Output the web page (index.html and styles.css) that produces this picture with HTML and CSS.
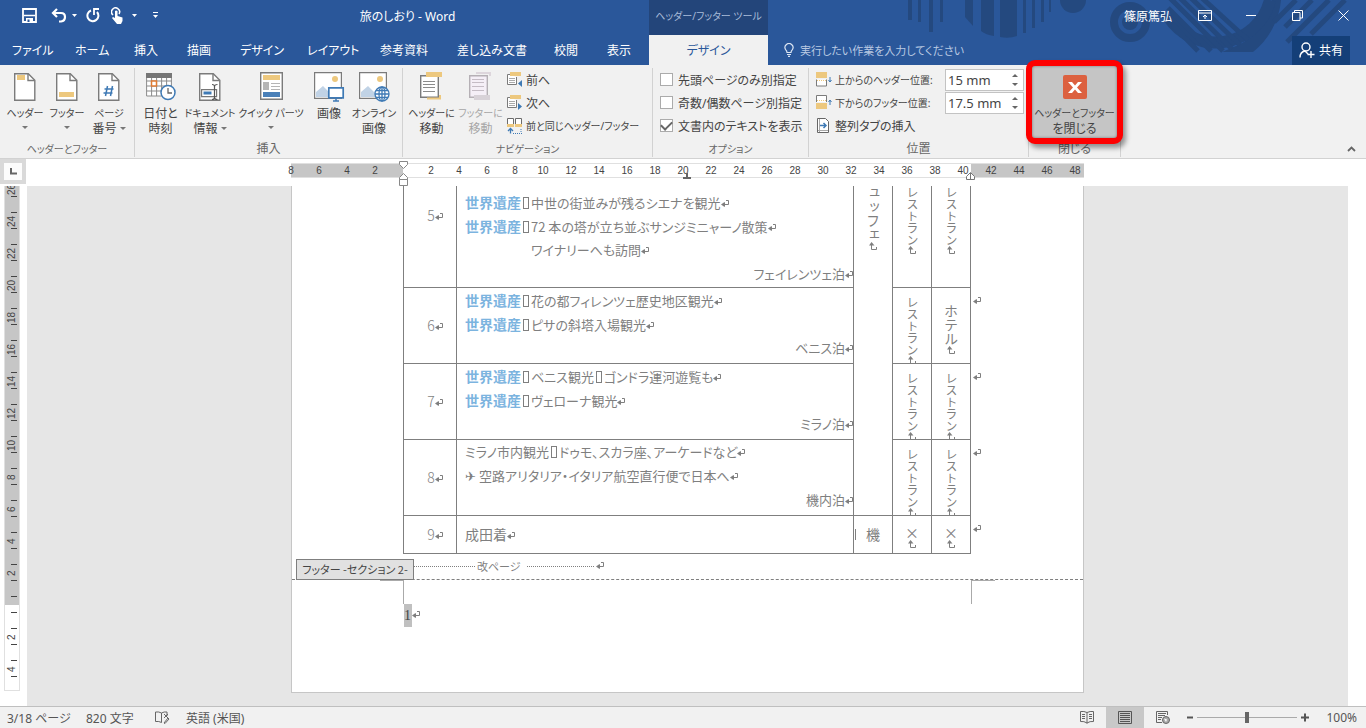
FILE: index.html
```html
<!DOCTYPE html>
<html lang="ja">
<head>
<meta charset="utf-8">
<title>旅のしおり - Word</title>
<link rel="stylesheet" href="styles.css">
</head>
<body>
<svg class="defs" aria-hidden="true">
  <symbol id="ret" viewBox="0 0 8 8"><path d="M5 .5h2.500v4H2M3.500 2.500v4M2.500 3.500v2" fill="none" stroke="currentColor"/><path d="M0 4.500 3.500 2v5z" fill="currentColor"/></symbol>
  <symbol id="vret" viewBox="0 0 8 8"><path d="M2.500 2v5.500h5V5" fill="none" stroke="currentColor"/><path d="M2.500 0 5.500 3.500H0z" fill="currentColor"/></symbol>
  <symbol id="sheet" viewBox="0 0 22 28"><path d="M.7.7h13.600l6.500 6.500v20H.7z" fill="#fff" stroke="#7b7b7b" stroke-width="1.400"/><path d="M14 1v6.500h6.500" fill="none" stroke="#7b7b7b" stroke-width="1.400"/></symbol>
  <symbol id="photo" viewBox="0 0 28 27"><path d="M.6.6h26.800v25.800H.6z" fill="#fff" stroke="#7b7b7b" stroke-width="1.200"/><circle cx="21" cy="7" r="3" fill="#edc87e"/><path d="M2 25v-5l7-6 6 6 3-3 8 8z" fill="#c1d3e6"/></symbol>
</svg>
<div class="app">
  <header class="header">
    <svg class="decor" width="466" height="65" viewBox="900 0 466 65" aria-hidden="true">
      <g fill="#24497f"><path d="M908 0h4v20h-4zM918 0h3v22h-3zM929 0h4v32h-4zM940 0h3v22h-3zM965 0h8v26l-8-9zM981 0h13v36q-8-1-13-5zM1000 0h17v36q-8 3-17 1zM1023 0h3v33h-3zM1032 0h3v28h-3zM1041 0h3v22h-3zM1049 0h2v12h-2z"/><circle cx="1073" cy="0" r="13"/><circle cx="1130" cy="22" r="8"/></g>
      <circle cx="1130" cy="22" r="16" fill="none" stroke="#24497f" stroke-width="8"/>
      <path d="M1272 0A58 58 0 0 1 1236 46L1222 52H1253A75 75 0 0 0 1281 0z" fill="#24497f"/>
      <path d="M1270 0A56 56 0 0 1 1168 16" fill="none" stroke="#24497f" stroke-width="12"/>
      <path d="M1160 12l38 39M1168 8l43 43M1166 -6l57 57M1178 -4l54 53M1190 -3l50 48M1202 -2l46 42M1296 0l-22 22M1312 0l-27 27M1329 0l-42 42M1345 0l-34 34" stroke="#24497f" stroke-width="5"/>
    </svg>
    <div class="titlebar">
      <div class="quick">
        <button aria-label="上書き保存" class="q-save"><svg width="15" height="15" viewBox="0 0 15 15"><path d="M1 1h13v13H1z" fill="none" stroke="#fff" stroke-width="1.800"/><path d="M2 7.500h11" stroke="#fff" stroke-width="1.500"/><path d="M4 10h7v5H4z" fill="#fff"/><path d="M5.500 11.500h2V14h-2z" fill="#2a579a"/></svg></button>
        <button aria-label="元に戻す" class="q-undo"><svg width="16" height="15" viewBox="0 0 16 15"><path d="M2 5h8q4 0 4 4t-4 4.500H8M6 1 2 5l4 4" fill="none" stroke="#fff" stroke-width="2.200"/></svg><svg class="dd" width="5" height="3"><path d="M0 0h5L2.500 3z" fill="#fff"/></svg></button>
        <button aria-label="繰り返し" class="q-redo"><svg width="14" height="15" viewBox="0 0 14 15"><path d="M5 2.500A5.500 5.500 0 1 0 11 4" fill="none" stroke="#fff" stroke-width="2"/><path d="M8 7V1h5M8 6.500V2" fill="none" stroke="#fff" stroke-width="1.800"/></svg></button>
        <button aria-label="タッチ/マウス モード" class="q-touch"><svg width="13" height="17" viewBox="0 0 13 17"><path d="M2 8A4 4 0 1 1 8 7" fill="none" stroke="#fff" stroke-width="1.500"/><path d="M4 4q1-1 2.500 0v5l5 1.500V14l-1.500 3H6l-5-6 1-1 2 1z" fill="#fff"/></svg><svg class="dd" width="5" height="3"><path d="M0 0h5L2.500 3z" fill="#fff"/></svg></button>
        <button aria-label="カスタマイズ" class="q-more"><svg width="7" height="7"><path d="M1 .5h5" stroke="#fff"/><path d="M1 3h5L3.500 6z" fill="#fff"/></svg></button>
      </div>
      <div class="title">旅のしおり - Word</div>
    </div>
    <div class="context kana">ヘッダー/フッター ツール</div>
    <div class="window">
      <span class="user">篠原篤弘</span>
      <button aria-label="リボンの表示オプション"><svg width="14" height="11"><path d="M.5.5h13v10H.5zM.5 3h13M7 9V5M5 7l2-2 2 2" fill="none" stroke="#fff"/></svg></button>
      <button aria-label="最小化"><svg width="10" height="11"><path d="M0 5.500h10" stroke="#fff"/></svg></button>
      <button aria-label="元に戻す (縮小)"><svg width="11" height="11"><path d="M.5 2.500h7.500v8H.5zM2.500 2.500v-2h8v7.500H8" fill="none" stroke="#fff"/></svg></button>
      <button aria-label="閉じる"><svg width="11" height="11"><path d="m.5.5 10 10m0-10-10 10" stroke="#fff"/></svg></button>
    </div>
    <nav class="tabs">
      <a href="#">ファイル</a><a href="#">ホーム</a><a href="#">挿入</a><a href="#">描画</a><a href="#">デザイン</a><a href="#">レイアウト</a><a href="#">参考資料</a><a href="#">差し込み文書</a><a href="#">校閲</a><a href="#">表示</a>
    </nav>
    <a href="#" class="tab-active">デザイン</a>
    <div class="tell">
      <svg width="10" height="14" viewBox="0 0 10 14"><path d="M3 9.500Q3 8 1.600 6.600A4 4 0 1 1 8.400 6.600Q7 8 7 9.500zM3 11.500h4M4 13.300h2" fill="none" stroke="#dbe5f3" stroke-width="1.200"/></svg>
      <span class="hint">実行したい作業を入力してください</span>
      <button class="share"><svg width="16" height="17" viewBox="0 0 16 17"><circle cx="7" cy="5" r="4" fill="none" stroke="#fff" stroke-width="1.400"/><path d="M1 15.500Q1 10 6 9l3 3M12 9v7M8.500 12.500h7" fill="none" stroke="#fff" stroke-width="1.400"/></svg>共有</button>
    </div>
  </header>

  <section class="ribbon">
    <div class="group">
      <div class="tools g1">
        <button class="big"><svg width="22" height="28"><use href="#sheet"/><path d="M3 3h8v5H3z" fill="#edc87e"/></svg><span class="kana">ヘッダー</span><i class="caret"></i></button>
        <button class="big"><svg width="22" height="28"><use href="#sheet"/><path d="M3 20h15v5H3z" fill="#edc87e"/></svg><span class="kana">フッター</span><i class="caret"></i></button>
        <button class="big"><svg width="22" height="28"><use href="#sheet"/><path d="M9.500 14 7.500 24M14.500 14l-2 10M6.500 17h9M5.500 21h9" stroke="#3f7ab5" stroke-width="1.500"/></svg><span class="kana">ページ</span><span>番号 <i class="caret"></i></span></button>
      </div>
      <h2 class="kana">ヘッダーとフッター</h2>
    </div>
    <div class="group">
      <div class="tools g2">
        <button class="big"><svg width="30" height="28"><path d="M.6 4h25v20H.6z" fill="#fff"/><path d="M.6 4v20H18M.6 9h25M.6 14h25M.6 19h17M5.600 4v20M10.600 4v20M15.600 4v20M20.600 4v12M25.400 4v11" fill="none" stroke="#8b8b8b"/><path d="M0 1h26v5H0z" fill="#767676"/><path d="M5.500 9h5v5h-5z" fill="#fff" stroke="#e07b33" stroke-width="1.500"/><circle cx="22" cy="20.500" r="7" fill="#fff" stroke="#3f7ab5" stroke-width="1.500"/><path d="M22 16v5h4" fill="none" stroke="#666" stroke-width="1.300"/></svg><span>日付と<br>時刻</span></button>
        <button class="big"><svg width="22" height="28"><use href="#sheet"/><path d="M2.600 17.600h15v7h-15z" fill="#fff" stroke="#777" stroke-width="1.200"/><path d="M4.500 19.500h8v3h-8z" fill="#3f7ab5"/><path d="M13 12.500q2.500 0 2.500 2v11q0 2-2.500 2M18.500 12.500q-3 0-3 2v11q0 2 3 2" fill="none" stroke="#555" stroke-width="1.200"/></svg><span class="kana">ドキュメント</span><span>情報 <i class="caret"></i></span></button>
        <button class="big"><svg width="23" height="28"><path d="M.7.7h21.600v26.600H.7z" fill="#fff" stroke="#7b7b7b" stroke-width="1.400"/><path d="M3 3h17v5H3z" fill="#edc87e"/><path d="M3 10h6v8H3z" fill="#b5b5b5"/><path d="M11 11.500h9M11 14.500h9M11 17.500h9" stroke="#b5b5b5"/><path d="M3 20h17v5H3z" fill="#4a80b8"/></svg><span class="kana">クイック パーツ</span><i class="caret"></i></button>
        <button class="big"><svg width="30" height="30"><use href="#photo" width="28" height="27"/><path d="M14.800 15.800h14.400v10H14.800z" fill="#fff" stroke="#3f7ab5" stroke-width="1.700"/><path d="M22 26v3M19 29h6" stroke="#3f7ab5" stroke-width="1.500"/></svg><span>画像</span></button>
        <button class="big"><svg width="31" height="30"><use href="#photo" width="28" height="27"/><g fill="none" stroke="#3f7ab5" stroke-width="1.300"><circle cx="23" cy="22" r="7" fill="#fff"/><ellipse cx="23" cy="22" rx="3" ry="7"/><path d="M16 22h14M17 18.500h12M17 25.500h12M23 15v14"/></g></svg><span class="kana">オンライン</span><span>画像</span></button>
      </div>
      <h2>挿入</h2>
    </div>
    <div class="group">
      <div class="tools g3">
        <button class="big"><svg width="23" height="28"><path d="M.7 3.700h17.600v21.600H.7z" fill="#fff" stroke="#7b7b7b" stroke-width="1.400"/><path d="M6 0h16v5H6z" fill="#edc87e"/><path d="M3 9.500h12M3 12.500h12M3 15.500h12M3 19.500h12" stroke="#8b8b8b"/><path d="M20 23v3.500H7" fill="none" stroke="#edc87e" stroke-width="2"/></svg><span class="kana">ヘッダーに</span><span>移動</span></button>
        <button class="big off" disabled><svg width="23" height="28"><path d="M.7 3.700h17.600v21.600H.7z" fill="#f5eff7" stroke="#b5b0b5" stroke-width="1.400"/><path d="M7 1h14v3" fill="none" stroke="#ddd6dc" stroke-width="2"/><path d="M3 7.500h12M3 10.500h12M3 14.500h12M3 18.500h12" stroke="#c5bcc5"/><path d="M5 23h16v5H5z" fill="#d8d2d8"/></svg><span class="kana">フッターに</span><span>移動</span></button>
        <div class="rows">
          <button><svg width="16" height="16"><path d="M3 2.500H.5v10h9V5" fill="#fff" stroke="#7b7b7b"/><path d="M3 0h11v4H3z" fill="#edc87e"/><path d="M2 6.500h6M2 8.500h6M2 10.500h6" stroke="#aaa"/><path d="M15 8v7l-4-3.500z" fill="#3f7ab5"/></svg>前へ</button>
          <button><svg width="16" height="16"><path d="M3 2.500H.5v10h9V5" fill="#fff" stroke="#7b7b7b"/><path d="M3 0h11v4H3z" fill="#edc87e"/><path d="M2 6.500h6M2 8.500h6M2 10.500h6" stroke="#aaa"/><path d="M11 8v7l4-3.500z" fill="#3f7ab5"/></svg>次へ</button>
          <button class="kana"><svg width="16" height="16"><path d="M.5 6V.5h6V6M8.500 6V.5h6V6" fill="#fff" stroke="#6b6b6b"/><path d="M0 6h7v3H0zM8 6h7v3H8z" fill="#edc87e"/><path d="M3.500 15.500V11M1 13l2.500-2.500L6 13" fill="none" stroke="#3f7ab5" stroke-width="1.300"/><path d="M6 15.500h9M14 11v4" stroke="#3f7ab5" stroke-dasharray="1 1"/></svg>前と同じヘッダー/フッター</button>
        </div>
      </div>
      <h2 class="kana">ナビゲーション</h2>
    </div>
    <div class="group">
      <div class="tools g4">
        <label><input type="checkbox">先頭ページのみ別指定</label>
        <label><input type="checkbox">奇数/偶数ページ別指定</label>
        <label><input type="checkbox" checked>文書内のテキストを表示</label>
      </div>
      <h2 class="kana">オプション</h2>
    </div>
    <div class="group">
      <div class="tools g5">
        <svg width="16" height="15"><path d="M.5 7.500V14h10V7.500" fill="#fff" stroke="#7b7b7b"/><path d="M0 0h11v6H0z" fill="#edc87e"/><path d="M1 8.500h9" stroke="#edc87e" stroke-dasharray="1 1"/><path d="M14 5v5M12.500 8 14 10l1.500-2" fill="none" stroke="#3f7ab5"/></svg><label class="kana" for="top">上からのヘッダー位置:</label>
        <div class="spin"><input id="top" value="15 mm"><span class="arrows"><button aria-label="増やす" class="up"></button><button aria-label="減らす" class="down"></button></span></div>
        <svg width="16" height="15"><path d="M.5 7V.5h10V7" fill="#fff" stroke="#7b7b7b"/><path d="M0 8h11v6H0z" fill="#edc87e"/><path d="M1 5.500h9" stroke="#edc87e" stroke-dasharray="1 1"/><path d="M14 5v5M12.500 7 14 5l1.500 2" fill="none" stroke="#3f7ab5"/></svg><label class="kana" for="bottom">下からのフッター位置:</label>
        <div class="spin"><input id="bottom" value="17.5 mm"><span class="arrows"><button aria-label="増やす" class="up"></button><button aria-label="減らす" class="down"></button></span></div>
        <svg width="16" height="16"><path d="M1.500.5h8l3 3v11h-11z" fill="#fff" stroke="#666"/><path d="M3.500 1v13M2 12.500h10" stroke="#aaa"/><path d="M4 7.500h6M7.500 5 10 7.500 7.500 10" fill="none" stroke="#3f7ab5" stroke-width="1.500"/></svg><button class="plain">整列タブの挿入</button>
      </div>
      <h2>位置</h2>
    </div>
    <div class="group closing">
      <button class="close"><svg width="24" height="24"><rect width="24" height="24" rx="2" fill="#dc6140"/><path d="M5 7h4l3 3.500L15 7h4l-5 5.500 5 5.500h-4l-3-3.500L9 18H5l5-5.500z" fill="#fff"/></svg><span class="lines"><span class="kana">ヘッダーとフッター</span><span>を閉じる</span></span></button>
      <h2>閉じる</h2>
    </div>
    <button class="fold" aria-label="リボンを折りたたむ"><svg width="9" height="6"><path d="M1 5l3.500-3.500L8 5" fill="none" stroke="#666" stroke-width="1.800"/></svg></button>
  </section>

  <main class="desk">
    <div class="corner"><button aria-label="左揃えタブ"><svg width="7" height="7"><path d="M1 0v5.500h6" fill="none" stroke="#666" stroke-width="2"/></svg></button></div>
    <div class="hruler-wrap">
      <div class="hruler">
        <span>8</span><span>6</span><span>4</span><span>2</span><span></span><span>2</span><span>4</span><span>6</span><span>8</span><span>10</span><span>12</span><span>14</span><span>16</span><span>18</span><span>20</span><span>22</span><span>24</span><span>26</span><span>28</span><span>30</span><span>32</span><span>34</span><span>36</span><span>38</span><span>40</span><span>42</span><span>44</span><span>46</span><span>48</span>
      </div>
      <svg class="mark indent" width="9" height="26"><path d="M.5.500h8v3l-4 4-4-4zM4.500 12.500l4 4v2h-8v-2zM.5 18.500h8v6h-8z" fill="#fff" stroke="#888"/></svg>
      <svg class="mark tabstop" width="8" height="6"><path d="M4 0v5M0 5h8" stroke="#666" stroke-width="2"/></svg>
      <svg class="mark right-indent" width="9" height="8"><path d="M4.500.500l4 4v3h-8v-3zM4.500 1v6" fill="#fff" stroke="#777"/></svg>
    </div>
    <div class="vruler-wrap">
      <div class="vruler">
        <span>26</span><span>24</span><span>22</span><span>20</span><span>18</span><span>16</span><span>14</span><span>12</span><span>10</span><span>8</span><span>6</span><span>4</span><span>2</span><span></span><span>2</span><span>4</span>
      </div>
    </div>
    <div class="canvas">
      <article class="page">
        <table class="plan">
          <colgroup><col class="c-day"><col class="c-text"><col class="c-meal"><col class="c-meal"><col class="c-meal"><col class="c-end"></colgroup>
          <tr class="r5">
            <td class="day">5<svg class="ret"><use href="#ret"/></svg></td>
            <td class="body"><p><b>世界遺産</b><i class="box"></i>中世の街並みが残るシエナを観光<svg class="ret"><use href="#ret"/></svg></p><p><b>世界遺産</b><i class="box"></i>72 本の塔が立ち並ぶサンジミニャーノ散策<svg class="ret"><use href="#ret"/></svg></p><p class="sub">ワイナリーへも訪問<svg class="ret"><use href="#ret"/></svg></p><p class="stay">フェイレンツェ泊<svg class="ret"><use href="#ret"/></svg></p></td>
            <td class="meal" rowspan="4"><div class="v large">ュッフェ<svg class="ret"><use href="#vret"/></svg></div></td>
            <td class="meal"><div class="v">レストラン<svg class="ret"><use href="#vret"/></svg></div></td>
            <td class="meal"><div class="v">レストラン<svg class="ret"><use href="#vret"/></svg></div></td>
            <td class="end"></td>
          </tr>
          <tr>
            <td class="day">6<svg class="ret"><use href="#ret"/></svg></td>
            <td class="body"><p><b>世界遺産</b><i class="box"></i>花の都フィレンツェ歴史地区観光<svg class="ret"><use href="#ret"/></svg></p><p><b>世界遺産</b><i class="box"></i>ピサの斜塔入場観光<svg class="ret"><use href="#ret"/></svg></p><p class="stay">ベニス泊<svg class="ret"><use href="#ret"/></svg></p></td>
            <td class="meal"><div class="v">レストラン<svg class="ret"><use href="#vret"/></svg></div></td>
            <td class="meal"><div class="v large hotel">ホテル<svg class="ret"><use href="#vret"/></svg></div></td>
            <td class="end"><svg class="ret"><use href="#ret"/></svg></td>
          </tr>
          <tr>
            <td class="day">7<svg class="ret"><use href="#ret"/></svg></td>
            <td class="body"><p><b>世界遺産</b><i class="box"></i>ベニス観光<i class="box"></i>ゴンドラ運河遊覧も<svg class="ret"><use href="#ret"/></svg></p><p><b>世界遺産</b><i class="box"></i>ヴェローナ観光<svg class="ret"><use href="#ret"/></svg></p><p class="stay">ミラノ泊<svg class="ret"><use href="#ret"/></svg></p></td>
            <td class="meal"><div class="v">レストラン<svg class="ret"><use href="#vret"/></svg></div></td>
            <td class="meal"><div class="v">レストラン<svg class="ret"><use href="#vret"/></svg></div></td>
            <td class="end"><svg class="ret"><use href="#ret"/></svg></td>
          </tr>
          <tr>
            <td class="day">8<svg class="ret"><use href="#ret"/></svg></td>
            <td class="body"><p>ミラノ市内観光<i class="box"></i>ドゥモ、スカラ座、アーケードなど<svg class="ret"><use href="#ret"/></svg></p><p><span class="plane">✈</span>空路アリタリア・イタリア航空直行便で日本へ<svg class="ret"><use href="#ret"/></svg></p><p class="stay">機内泊<svg class="ret"><use href="#ret"/></svg></p></td>
            <td class="meal"><div class="v">レストラン<svg class="ret"><use href="#vret"/></svg></div></td>
            <td class="meal"><div class="v">レストラン<svg class="ret"><use href="#vret"/></svg></div></td>
            <td class="end"><svg class="ret"><use href="#ret"/></svg></td>
          </tr>
          <tr class="r9">
            <td class="day">9<svg class="ret"><use href="#ret"/></svg></td>
            <td class="body">成田着<svg class="ret"><use href="#ret"/></svg></td>
            <td class="meal mid flight">機</td>
            <td class="meal"><div class="v large">×<svg class="ret"><use href="#vret"/></svg></div></td>
            <td class="meal"><div class="v large">×<svg class="ret"><use href="#vret"/></svg></div></td>
            <td class="end"><svg class="ret"><use href="#ret"/></svg></td>
          </tr>
        </table>
        <div class="break"><span>改ページ</span><svg class="ret"><use href="#ret"/></svg></div>
        <footer class="foot">
          <span class="tag">フッター -セクション 2-</span>
          <div class="crops"><i class="crop-l"></i><i class="crop-r"></i></div>
          <p><mark>1</mark><svg class="ret"><use href="#ret"/></svg></p>
        </footer>
      </article>
    </div>
    <div class="scroll"></div>
  </main>

  <footer class="status">
    <span class="pages">3/18 ページ</span><span class="words">820 文字</span>
    <svg class="proof" width="15" height="13"><path d="M6.500 2v9.500M6.500 2Q4 .5 .5 1v9.500q3.500-.5 6 1M6.500 2Q9 .5 12 1v4M9 12l4-5 1 1-4 4.500z" fill="none" stroke="#666"/><path d="M9 3l4 4M13 3 9 7" stroke="#666"/></svg>
    <span class="lang">英語 (米国)</span>
    <div class="views">
      <button aria-label="閲覧モード"><svg width="14" height="13"><path d="M7 1.500v11M7 1.500Q4 0 .5.500v10Q4 10 7 12M7 1.500Q10 0 13.500.5v10Q10 10 7 12M2 3.500h3M2 5.500h3M2 7.500h3M9 3.500h3M9 5.500h3M9 7.500h3" fill="none" stroke="#666"/></svg></button>
      <button aria-label="印刷レイアウト" class="on"><svg width="14" height="13"><path d="M.5.500h13v12H.5zM2 2.500h10M2 4.500h10M2 6.500h10M2 8.500h10M2 10.500h10" fill="none" stroke="#555"/></svg></button>
      <button aria-label="Web レイアウト"><svg width="14" height="13"><path d="M11.500 4V.5H.5v11H6M2 2.500h8M2 4.500h7M2 6.500h4M2 8.500h3" fill="none" stroke="#666"/><circle cx="10" cy="9" r="3.500" fill="#aaa" stroke="#666"/><path d="M8 7.500l3 1-1 2.500z" fill="#fff"/></svg></button>
    </div>
    <div class="zoom">
      <button aria-label="縮小"><svg width="6" height="9"><path d="M0 4.500h6" stroke="#555" stroke-width="2"/></svg></button>
      <input type="range" min="0" max="100" value="50" aria-label="ズーム">
      <button aria-label="拡大"><svg width="8" height="9"><path d="M0 4.500h8M4 .5v8" stroke="#555" stroke-width="2"/></svg></button>
      <span>100%</span>
    </div>
  </footer>
</div>
</body>
</html>
```
FILE: styles.css
```css
* { box-sizing: border-box; }
body {
  margin: 0;
  font-family: "Noto Sans", "Noto Sans CJK JP", sans-serif;
  font-size: 12px;
  color: #444;
  font-feature-settings: "palt";
}
button, input { font: inherit; color: inherit; font-feature-settings: inherit; }
button { border: 0; background: none; padding: 0; }
a { color: inherit; text-decoration: none; }
h2, p { margin: 0; font-weight: 400; }
h2 { font-size: 12px; }
.defs { position: absolute; width: 0; height: 0; }
.app { display: flex; flex-direction: column; height: 100vh; overflow: hidden; }
.app .kana { font-size: 10px; }

/* Title bar and tabs */
.header {
  position: relative;
  display: grid;
  grid-template-columns: 649px 119px 1fr;
  grid-template-rows: 35px 30px;
  background: #2a579a;
  color: #fff;
  white-space: nowrap;
}
.header > * { position: relative; }
.header > .decor { position: absolute; right: 0; top: 0; }
.titlebar { display: flex; align-items: center; padding-bottom: 4px; }
.quick { display: flex; align-items: center; width: 166px; padding-left: 22px; }
.quick button { display: flex; align-items: center; gap: 5px; }
.quick svg { display: block; }
.q-save { width: 29px; }
.q-undo { width: 35px; }
.q-redo { width: 25px; }
.q-touch { width: 41px; }
.q-touch .dd { margin-left: 3px; }
.title { flex: 1; text-align: center; }
.context { display: flex; align-items: center; justify-content: center; background: #23457a; color: #a9bcd9; padding-bottom: 4px; }
.window { display: flex; align-items: center; justify-content: flex-end; padding-bottom: 4px; }
.window button { width: 46px; height: 30px; display: flex; align-items: center; justify-content: center; }
.user { margin-right: 10px; }
.tabs { display: grid; grid-template-columns: 63px 59px 53px 53px 67px 73px 77px 97px 53px 1fr; align-items: center; padding-left: 12px; }
.tab-active { display: flex; align-items: center; justify-content: center; background: #f1f1f1; color: #2a579a; }
.tell { display: flex; align-items: center; gap: 6px; padding: 0 16px; color: #b9c9e2; }
.hint { font-size: 11px; }
.share { margin-left: auto; width: 58px; height: 29px; display: flex; align-items: center; justify-content: center; gap: 4px; background: #143f78; color: #fff; }

/* Ribbon */
.ribbon {
  position: relative;
  z-index: 1;
  display: grid;
  grid-template-columns: 135px 268px 250px 156px 220px 92px 1fr;
  height: 94px;
  padding: 3px 0 1px;
  background: #f1f1f1;
  border-bottom: 1px solid #d2d2d2;
  white-space: nowrap;
}
.group { display: flex; flex-direction: column; border-right: 1px solid #d2d2d2; min-width: 0; }
.group h2 { margin-top: auto; line-height: 16px; text-align: center; color: #666; }
.tools { height: 69px; }
.g1, .g2, .g3 { display: grid; }
.g1 { grid-template-columns: 42px 42px 42px; padding-left: 4px; }
.g2 { grid-template-columns: 49px 50px 72px 44px 46px; padding-left: 1px; }
.g3 { grid-template-columns: 49px 49px 1fr; padding-left: 4px; }
.big { display: flex; flex-direction: column; align-items: center; padding-top: 4px; line-height: 15px; }
.big svg { flex: none; height: 30px; display: block; margin-bottom: 4px; overflow: visible; }
.big > span { display: block; margin: 0 -8px; }
.off { color: #a6a6a6; }
.caret { display: inline-block; border: 3px solid transparent; border-top-color: #777; border-bottom: 0; vertical-align: 3px; }
.big > .caret { margin-top: 5px; }
.rows { display: grid; grid-template-rows: 23px 23px 23px; padding-left: 2px; }
.rows button { display: flex; align-items: center; gap: 3px; }
.g4 { display: grid; grid-template-rows: 23px 23px 23px; padding-left: 7px; }
.g4 label { display: flex; align-items: center; gap: 5px; }
.g4 input { appearance: none; width: 13px; height: 13px; margin: 0; background: #fff; border: 1px solid #ababab; display: grid; place-items: center; }
.g4 input:checked::after { content: ""; width: 9px; height: 5px; border: solid #666; border-width: 0 0 2px 2px; transform: translateY(-1px) rotate(-45deg); }
.g5 { display: grid; grid-template-columns: 19px 110px 79px; grid-template-rows: 23px 23px 23px; align-items: center; padding-left: 7px; }
.spin { display: flex; width: 79px; height: 22px; background: #fff; border: 1px solid #c3c3c3; }
.spin input { flex: 1; min-width: 0; border: 0; padding: 0 2px; background: none; font-size: 13px; }
.arrows { display: flex; flex-direction: column; justify-content: space-around; padding: 1px 5px; }
.up, .down { border: 3px solid transparent; }
.up { border-top: 0; border-bottom-color: #666; }
.down { border-bottom: 0; border-top-color: #666; }
.plain { text-align: left; }
.closing { position: relative; }
.close {
  position: absolute;
  top: -8px;
  left: -3px;
  width: 97px;
  height: 84px;
  display: flex;
  flex-direction: column;
  align-items: center;
  gap: 7px;
  padding-top: 9px;
  line-height: 15px;
  background: #c5c5c5;
  border: 6px solid #fe0000;
  border-radius: 9px;
  box-shadow: 3px 4px 5px rgba(0, 0, 0, .4), inset 0 0 3px rgba(0, 0, 0, .4);
}
.close svg { flex: none; }
.lines { display: flex; flex-direction: column; align-items: center; }
.fold { justify-self: end; align-self: end; padding: 0 10px 1px 0; }

/* Rulers and canvas */
.desk { flex: 1; min-height: 0; display: grid; grid-template-columns: 27px 1fr 18px; grid-template-rows: 27px 1fr; background: #fff; font-family: "Liberation Sans", Arial, sans-serif; }
.corner { width: 26px; height: 25px; padding: 4px; background: #d9d9d9; }
.corner button { width: 18px; height: 17px; background: #fcfcfc; display: grid; place-items: center; }
.hruler-wrap { grid-column: 2; width: 793px; margin: 4px auto 0; height: 15px; position: relative; }
.hruler {
  display: flex;
  height: 15px;
  border: solid #e0e0e0;
  border-width: 1px 0;
  background: linear-gradient(90deg, #c6c6c6 112px, #fff 112px 680px, #c6c6c6 680px);
  font-size: 10px;
  line-height: 13px;
}
.hruler span { flex: none; width: 28px; text-align: center; }
.hruler span:first-child { margin-left: -14px; }
.mark { position: absolute; }
.indent { left: 108px; top: -2px; }
.tabstop { left: 392px; top: 10px; }
.right-indent { left: 675px; top: 9px; }
.vruler-wrap { grid-row: 2; grid-column: 1; padding: 0 0 15px 4px; overflow: hidden; }
.vruler {
  width: 16px;
  height: 100%;
  overflow: hidden;
  border: 1px solid #e0e0e0;
  border-top: 0;
  background:
    repeating-linear-gradient(#0000 0 10px, #444 10px 11px, #0000 11px 16px) 6px 0 / 6px 100% no-repeat,
    linear-gradient(#c6c6c6 419px, #fff 419px);
  font-size: 10px;
}
.vruler span { display: block; height: 32px; width: 14px; line-height: 14px; text-align: center; writing-mode: vertical-rl; transform: rotate(180deg); }
.vruler span:first-child { margin-top: -13px; }
.canvas { grid-row: 2; grid-column: 2; background: #e6e6e6; overflow: hidden; padding-bottom: 13px; display: flex; justify-content: center; }
.page {
  width: 793px;
  border: solid #c6c6c6;
  border-width: 0 1px 1px;
  background: #fff;
  color: #7f7f7f;
  font-family: "Noto Sans CJK JP", sans-serif;
  font-size: 14px;
  overflow: hidden;
}

/* Itinerary */
.plan { width: 580px; margin-left: 111px; table-layout: fixed; border-collapse: collapse; line-height: 24px; }
.c-day { width: 53px; }
.c-text { width: 397px; }
.c-meal { width: 39px; }
.c-end { width: 13px; }
.plan tr { height: 76px; }
.plan .r5 { height: 101px; }
.plan .r9 { height: 38px; }
.plan td { padding: 0; border: 1px solid #7f7f7f; vertical-align: top; white-space: nowrap; }
.plan .r5 td { border-top: 0; }
.plan .end { border: 0; padding-left: 2px; }
.plan .day { text-align: center; vertical-align: middle; padding-left: 10px; font-weight: 300; }
.plan .r5 .day { vertical-align: top; padding-top: 17px; }
.plan .body { padding-left: 8px; }
.plan .body p { height: 24px; font-size: 13px; }
.plan .r5 .body { padding-top: 4px; }
.plan .r9 .body, .plan .mid { vertical-align: middle; text-align: left; }
.plan .flight { text-align: center; background: linear-gradient(#7f7f7f, #7f7f7f) 1px center / 1px 11px no-repeat; }
.ret { width: 8px; height: 8px; display: inline-block; vertical-align: 0; }
b { color: #7cb4df; font-size: 14px; font-weight: 700; }
.box { display: inline-block; width: 6px; height: 12px; margin: 0 2px; border: 1px solid #7f7f7f; vertical-align: -1px; }
.sub { padding-left: 66px; }
.stay { text-align: right; }
.plane { display: inline-block; width: 14px; line-height: 1; font-family: "DejaVu Sans", sans-serif; }
.v { writing-mode: vertical-rl; font-size: 12px; line-height: 14px; height: 75px; width: 14px; margin: 0 auto; padding-top: 8px; overflow: hidden; }
.r5 .v { padding-top: 0; }
.large { font-size: 14px; }
.plan .hotel { padding-top: 16px; }
.r9 .v { height: 37px; padding-top: 10px; }
.v .ret { vertical-align: baseline; }
.break { display: flex; align-items: center; gap: 2px; width: 201px; margin-left: 111px; height: 25px; font-size: 11px; }
.break::before { content: ""; width: 72px; border-top: 1px dotted #7f7f7f; }
.break span { flex: 1; display: flex; align-items: center; gap: 6px; }
.break span::after { content: ""; flex: 1; border-top: 1px dotted #7f7f7f; }
.foot { position: relative; border-top: 1px dashed #7f7f7f; }
.tag { position: absolute; left: 4px; bottom: 100%; width: 118px; height: 21px; text-align: center; line-height: 19px; font-size: 11px; color: #444; background: #e1e1e1; border: 1px solid #7f7f7f; white-space: nowrap; }
.crops { display: flex; justify-content: space-between; padding: 0 88px; }
.crop-l, .crop-r { width: 24px; height: 24px; border-top: 1px solid #aaa; }
.crop-l { border-right: 1px solid #aaa; }
.crop-r { border-left: 1px solid #aaa; }
.foot p { padding-left: 112px; display: flex; align-items: center; }
mark { width: 8px; background: #c0c0c0; color: #444; font: 14px/23px "Liberation Serif", serif; }

/* Status bar */
.status { height: 22px; display: flex; align-items: center; padding: 0 9px 0 7px; background: #f1f1f1; border-top: 1px solid #bfbfbf; color: #555; }
.pages { width: 79px; }
.words { width: 69px; }
.proof { margin-right: 16px; }
.views { display: flex; align-self: stretch; margin-left: auto; }
.views button { width: 38px; display: grid; place-items: center; }
.views .on { background: #c8c8c8; }
.zoom { display: flex; align-items: center; gap: 4px; margin-left: 5px; }
.zoom input { appearance: none; width: 100px; height: 12px; margin: 0; background: linear-gradient(#aaa, #aaa) center / 100% 1px no-repeat; }
.zoom input::-webkit-slider-thumb { appearance: none; width: 4px; height: 11px; background: #666; }
.zoom button { display: flex; }
.zoom span { width: 44px; text-align: right; }
```
